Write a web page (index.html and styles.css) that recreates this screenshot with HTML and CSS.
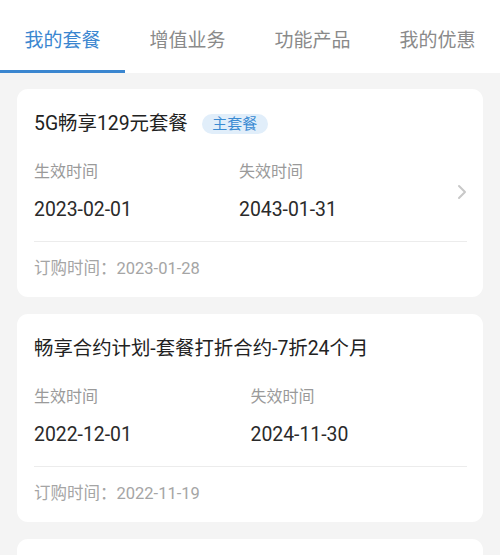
FILE: index.html
```html
<!DOCTYPE html>
<html lang="zh-CN">
<head>
<meta charset="utf-8">
<title>我的套餐</title>
<link rel="stylesheet" href="styles.css">
</head>
<body>
<nav class="tabs">
  <div class="tab active">我的套餐</div>
  <div class="tab">增值业务</div>
  <div class="tab">功能产品</div>
  <div class="tab">我的优惠</div>
</nav>
<main class="list">
  <section class="card">
    <div class="title-row">
      <span class="title">5G畅享129元套餐</span>
      <span class="badge">主套餐</span>
    </div>
    <div class="info-row">
      <div class="info">
        <div class="col">
          <div class="label">生效时间</div>
          <div class="date">2023-02-01</div>
        </div>
        <div class="col">
          <div class="label">失效时间</div>
          <div class="date">2043-01-31</div>
        </div>
      </div>
      <svg class="chevron" width="10" height="16" viewBox="0 0 10 16"><polyline points="2,2 8,8 2,14" fill="none" stroke="#c8c8c8" stroke-width="2" stroke-linecap="round" stroke-linejoin="round"/></svg>
    </div>
    <div class="divider"></div>
    <div class="order">订购时间：2023-01-28</div>
  </section>
  <section class="card">
    <div class="title-row">
      <span class="title">畅享合约计划-套餐打折合约-7折24个月</span>
    </div>
    <div class="info-row">
      <div class="info">
        <div class="col">
          <div class="label">生效时间</div>
          <div class="date">2022-12-01</div>
        </div>
        <div class="col">
          <div class="label">失效时间</div>
          <div class="date">2024-11-30</div>
        </div>
      </div>
    </div>
    <div class="divider"></div>
    <div class="order">订购时间：2022-11-19</div>
  </section>
  <section class="card card-empty"></section>
</main>
</body>
</html>
```

FILE: styles.css
```css
* { box-sizing: border-box; }
html, body { margin: 0; padding: 0; }
body {
  background: #f4f4f4;
  font-family: Roboto, "Noto Sans CJK SC", "Noto Sans", sans-serif;
  color: #222;
}
.tabs {
  display: flex;
  background: #fff;
}
.tab {
  flex: 1;
  text-align: center;
  font-size: 19px;
  line-height: 24px;
  padding-top: 29px;
  padding-bottom: 17px;
  color: #8a8a8a;
  border-bottom: 3px solid transparent;
}
.tab.active {
  color: #3a86d0;
  border-bottom-color: #3a86d0;
}
.list {
  display: flex;
  flex-direction: column;
  gap: 17px;
  padding: 16px 17px 0;
}
.card {
  background: #fff;
  border-radius: 11px;
  padding: 23px 16px 17px 17px;
}
.card-empty { min-height: 60px; }
.title-row {
  display: flex;
  align-items: center;
  height: 24px;
}
.title {
  font-size: 19.4px;
  line-height: 24px;
  color: #222;
}
.badge {
  margin-left: 14px;
  height: 20px;
  line-height: 20px;
  padding: 0 10.5px;
  border-radius: 10px;
  background: #e1eefa;
  color: #3b8bd3;
  font-size: 15px;
}
.info-row {
  display: flex;
  align-items: center;
  margin-top: 25px;
}
.info {
  flex: 1;
  display: grid;
  grid-template-columns: 1fr 1fr;
}
.chevron {
  margin-left: 13px;
  flex: none;
}
.label {
  font-size: 16px;
  line-height: 22px;
  color: #9a9a9a;
}
.date {
  margin-top: 15px;
  font-size: 19.4px;
  line-height: 24px;
  color: #2a2a2a;
}
.divider {
  height: 1px;
  background: #ececec;
  margin-top: 19px;
}
.order {
  margin-top: 16px;
  font-size: 16.5px;
  line-height: 22px;
  color: #a5a5a5;
}
```
